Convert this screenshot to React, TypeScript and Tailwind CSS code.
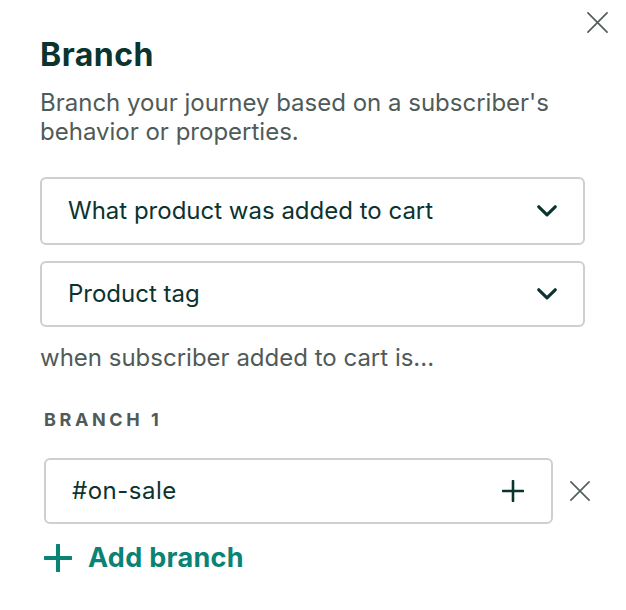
import React from "react";

const Chevron = () => (
  <svg width="20" height="12" viewBox="0 0 20 12" fill="none">
    <path d="M1.8 1.8 L10 9.8 L18.2 1.8" stroke="#0b332f" strokeWidth="3.2" strokeLinecap="round" strokeLinejoin="round" />
  </svg>
);

const XIcon = ({ size = 22, color = "#52605d", sw = 1.8 }: { size?: number; color?: string; sw?: number }) => (
  <svg width={size} height={size} viewBox="0 0 22 22" fill="none">
    <path d="M1 1 L21 21 M21 1 L1 21" stroke={color} strokeWidth={sw} strokeLinecap="round" />
  </svg>
);

const Plus = ({ size = 22, color = "#0b332f", sw = 2.6 }: { size?: number; color?: string; sw?: number }) => (
  <svg width={size} height={size} viewBox="0 0 22 22" fill="none">
    <path d="M11 1 V21 M1 11 H21" stroke={color} strokeWidth={sw} strokeLinecap="round" />
  </svg>
);

export default function App() {
  return (
    <div className="relative w-[626px] h-[610px] bg-white font-['Inter',sans-serif] pl-[40px] pr-[41px] pt-[35px]">
      <button className="absolute top-[12px] right-[18px]">
        <XIcon size={21} />
      </button>
      <h1 className="text-[32px] leading-[40px] font-bold tracking-[0.5px] text-[#0b332f]">Branch</h1>
      <p className="mt-[13px] text-[24px] leading-[29px] text-[#4f5b59]">
        Branch your journey based on a subscriber's behavior or properties.
      </p>
      <div className="mt-[31px] flex flex-col gap-[16px]">
        <div className="h-[68px] border-2 border-[#cfcfcf] rounded-[6px] flex items-center justify-between pl-[26px] pr-[26px]">
          <span className="text-[24px] text-[#0b332f]">What product was added to cart</span>
          <Chevron />
        </div>
        <div className="h-[66px] border-2 border-[#cfcfcf] rounded-[6px] flex items-center justify-between pl-[26px] pr-[26px]">
          <span className="text-[24px] text-[#0b332f]">Product tag</span>
          <Chevron />
        </div>
      </div>
      <p className="mt-[16px] text-[24px] leading-[29px] text-[#4f5b59]">when subscriber added to cart is...</p>
      <div className="mt-[37px] pl-[4px] text-[18px] leading-[22px] font-bold tracking-[3.6px] text-[#4f5b59]">BRANCH 1</div>
      <div className="mt-[27px] pl-[4px] flex items-center">
        <div className="w-[509px] shrink-0 h-[66px] border-2 border-[#cfcfcf] rounded-[6px] flex items-center justify-between pl-[26px] pr-[27px]">
          <span className="text-[24px] tracking-[0.5px] text-[#0b332f]">#on-sale</span>
          <Plus size={22} />
        </div>
        <button className="ml-[17px] shrink-0">
          <XIcon size={20} />
        </button>
      </div>
      <button className="mt-[19px] pl-[4px] flex items-center gap-[16px]">
        <Plus size={28} color="#0a8276" sw={3.2} />
        <span className="text-[27px] leading-[30px] font-bold tracking-[0.3px] text-[#0a8276]">Add branch</span>
      </button>
    </div>
  );
}
